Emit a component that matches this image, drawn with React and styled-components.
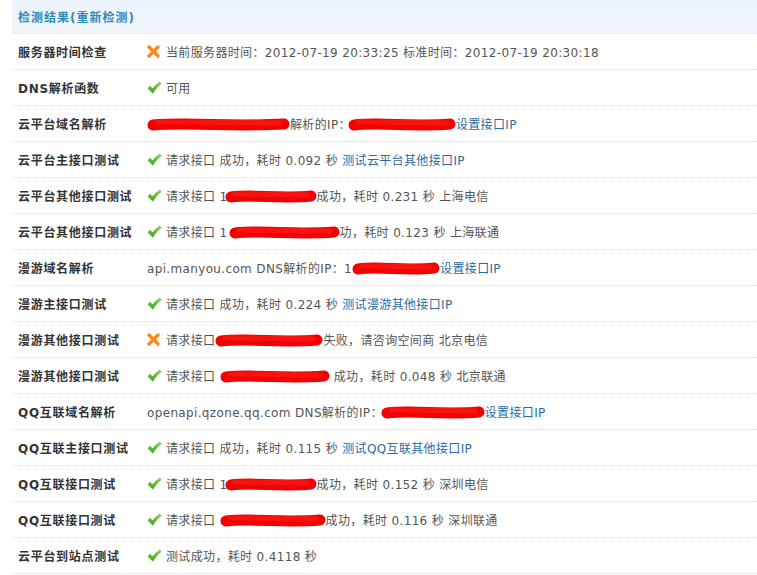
import React from 'react';
import styled, { createGlobalStyle } from 'styled-components';

const GlobalStyle = createGlobalStyle`
  html, body {
    margin: 0;
    padding: 0;
    background: #fff;
  }
  body {
    font-family: "DejaVu Sans", "Noto Sans CJK SC", sans-serif;
    font-size: 12px;
    color: #555;
  }
`;

const Wrap = styled.div`
  margin-left: 12px;
  width: calc(100% - 12px);
  border-bottom: 1px solid #e3edf6;
`;

const Head = styled.div`
  height: 33px;
  display: flex;
  align-items: center;
  padding-left: 6px;
  background: linear-gradient(#ebf3fc, #f2f7fd);
  border-bottom: 1px dotted #dce8f3;
  font-weight: bold;
  color: #2a8bbd;
  letter-spacing: 1px;
`;

const Row = styled.div`
  height: 35px;
  display: flex;
  align-items: center;
  border-bottom: 1px dotted #d9d9d9;
  &:last-child {
    border-bottom: 0;
  }
`;

const Label = styled.div`
  width: 129px;
  padding-left: 6px;
  flex: none;
  font-weight: bold;
  color: #333;
  letter-spacing: 0.7px;
  white-space: nowrap;
`;

const Value = styled.div`
  display: flex;
  align-items: center;
  white-space: pre;
  color: #555;
  letter-spacing: 0.35px;
`;

const IconBox = styled.span`
  width: 19px;
  flex: none;
  display: inline-flex;
  align-items: center;
`;

const Link = styled.a`
  color: #2d6a9f;
  text-decoration: none;
  cursor: pointer;
`;

const MarkSvg = styled.svg`
  flex: none;
  display: block;
  margin: 0 ${(p) => p.$gap || 0}px 0 ${(p) => p.$shift || 0}px;
`;

function Scribble({ w, shift, gap, thick = 11 }) {
  const h = 18;
  const d = `M6 ${h / 2 + 1} C ${w * 0.3} ${h / 2 - 2}, ${w * 0.6} ${h / 2 + 3}, ${w - 6} ${h / 2}`;
  return (
    <MarkSvg width={w} height={h} $shift={shift} $gap={gap} viewBox={`0 0 ${w} ${h}`}>
      <path d={d} stroke="#f40000" strokeWidth={thick} strokeLinecap="round" fill="none" />
      <path d={`M10 ${h / 2 - 2} L ${w - 10} ${h / 2 - 1}`} stroke="#ff1010" strokeWidth="5" strokeLinecap="round" fill="none" />
    </MarkSvg>
  );
}

function CheckIcon() {
  return (
    <svg width="15" height="13" viewBox="0 0 15 13">
      <defs>
        <linearGradient id="chk" x1="0" y1="0" x2="0" y2="1">
          <stop offset="0" stopColor="#93d65c" />
          <stop offset="1" stopColor="#3c9f22" />
        </linearGradient>
      </defs>
      <path d="M0.4 7.3 L3.2 4.8 L5.6 7.2 Q9 3 12.8 0.4 L14.6 2.4 Q9.6 6.4 5.8 12.6 Z" fill="url(#chk)" />
    </svg>
  );
}

function CrossIcon() {
  return (
    <svg width="13" height="13" viewBox="0 0 13 13">
      <path d="M2 2 L11 11 M11 2 L2 11" stroke="#f5881f" strokeWidth="3.2" strokeLinecap="round" />
    </svg>
  );
}

const rows = [
  { label: '服务器时间检查', icon: 'x', parts: ['当前服务器时间：2012-07-19 20:33:25 标准时间：2012-07-19 20:30:18'] },
  { label: 'DNS解析函数', icon: 'ok', parts: ['可用'] },
  { label: '云平台域名解析', parts: [{ mark: 143 }, '解析的IP：', { mark: 108, shift: -3 }, { link: '设置接口IP' }] },
  { label: '云平台主接口测试', icon: 'ok', parts: ['请求接口 成功，耗时 0.092 秒 ', { link: '测试云平台其他接口IP' }] },
  { label: '云平台其他接口测试', icon: 'ok', parts: ['请求接口 1', { mark: 92, shift: -3 }, '成功，耗时 0.231 秒 上海电信'] },
  { label: '云平台其他接口测试', icon: 'ok', parts: ['请求接口 1', { mark: 111, shift: 1 }, '功，耗时 0.123 秒 上海联通'] },
  { label: '漫游域名解析', parts: ['api.manyou.com DNS解析的IP：1', { mark: 88 }, { link: '设置接口IP' }] },
  { label: '漫游主接口测试', icon: 'ok', parts: ['请求接口 成功，耗时 0.224 秒 ', { link: '测试漫游其他接口IP' }] },
  { label: '漫游其他接口测试', icon: 'x', parts: ['请求接口', { mark: 108 }, '失败，请咨询空间商 北京电信'] },
  { label: '漫游其他接口测试', icon: 'ok', parts: ['请求接口 ', { mark: 110 }, ' 成功，耗时 0.048 秒 北京联通'] },
  { label: 'QQ互联域名解析', parts: ['openapi.qzone.qq.com DNS解析的IP：', { mark: 104, shift: -2 }, { link: '设置接口IP' }] },
  { label: 'QQ互联主接口测试', icon: 'ok', parts: ['请求接口 成功，耗时 0.115 秒 ', { link: '测试QQ互联其他接口IP' }] },
  { label: 'QQ互联接口测试', icon: 'ok', parts: ['请求接口 1', { mark: 92, shift: -3 }, '成功，耗时 0.152 秒 深圳电信'] },
  { label: 'QQ互联接口测试', icon: 'ok', parts: ['请求接口 ', { mark: 106 }, '成功，耗时 0.116 秒 深圳联通'] },
  { label: '云平台到站点测试', icon: 'ok', parts: ['测试成功，耗时 0.4118 秒'] },
];

function renderPart(p, i) {
  if (typeof p === 'string') return <span key={i}>{p}</span>;
  if (p.link) return <Link key={i}>{p.link}</Link>;
  return <Scribble key={i} w={p.mark} shift={p.shift} gap={p.gap} />;
}

export default function App() {
  return (
    <>
      <GlobalStyle />
      <Wrap>
        <Head>检测结果(重新检测)</Head>
        {rows.map((r, i) => (
          <Row key={i}>
            <Label>{r.label}</Label>
            <Value>
              {r.icon && <IconBox>{r.icon === 'ok' ? <CheckIcon /> : <CrossIcon />}</IconBox>}
              {r.parts.map(renderPart)}
            </Value>
          </Row>
        ))}
      </Wrap>
    </>
  );
}
